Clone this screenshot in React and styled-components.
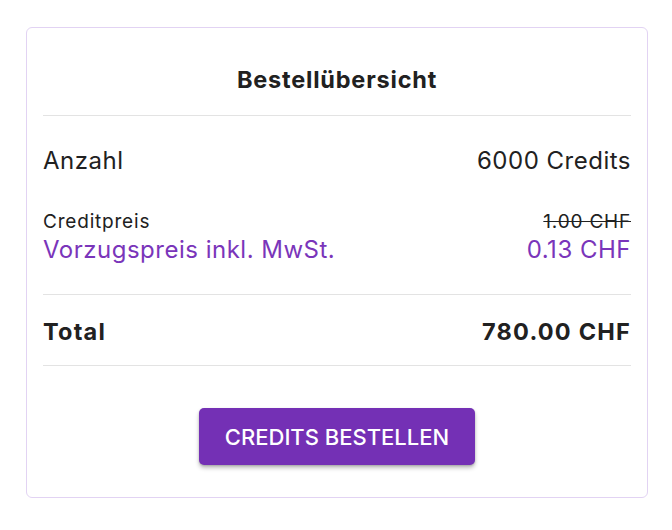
import React from 'react'
import styled, { createGlobalStyle } from 'styled-components'

const GlobalStyle = createGlobalStyle`
  body {
    margin: 0;
    background: #ffffff;
    font-family: Inter, Roboto, "Liberation Sans", sans-serif;
    color: #212121;
  }
`

const Page = styled.div`
  padding: 27px 24px 0 26px;
`

const Card = styled.section`
  width: 622px;
  height: 471px;
  box-sizing: border-box;
  border: 1px solid #e2d3f3;
  border-radius: 6px;
  padding: 0 16px;
  display: flex;
  flex-direction: column;
`

const Title = styled.h2`
  margin: 0;
  padding: 36px 0 19px;
  font-size: 23.5px;
  line-height: 32px;
  font-weight: 700;
  letter-spacing: 0.8px;
  text-align: center;
`

const Divider = styled.hr`
  margin: 0;
  border: none;
  border-top: 1px solid #e3e3e3;
`

const Section = styled.div`
  display: flex;
  flex-direction: column;
  padding: ${p => p.$pad || '0'};
`

const Row = styled.div`
  display: flex;
  justify-content: space-between;
  align-items: center;
  font-size: ${p => p.$size || 24}px;
  line-height: ${p => p.$line || 28}px;
  font-weight: ${p => (p.$bold ? 700 : 400)};
  letter-spacing: ${p => p.$track || 0.5}px;
  color: ${p => (p.$accent ? '#7a35ba' : '#212121')};
  margin-top: ${p => p.$top || 0}px;
`

const Old = styled.span`
  text-decoration: line-through;
`

const Actions = styled.div`
  display: flex;
  justify-content: center;
  padding-top: 42px;
`

const Button = styled.button`
  width: 276px;
  height: 57px;
  border: none;
  border-radius: 5px;
  background: #7430b5;
  color: #ffffff;
  font-family: Inter, Roboto, "Liberation Sans", sans-serif;
  font-size: 22px;
  font-weight: 500;
  text-transform: uppercase;
  box-shadow: 0 3px 4px rgba(0, 0, 0, 0.25), 0 1px 2px rgba(0, 0, 0, 0.15);
  cursor: pointer;
`

export default function App() {
  return (
    <>
      <GlobalStyle />
      <Page>
        <Card>
          <Title>Bestellübersicht</Title>
          <Divider />
          <Section $pad="31px 0 30px">
            <Row>
              <span>Anzahl</span>
              <span>6000 Credits</span>
            </Row>
            <Row $size={19} $line={24} $track={0.8} $top={35}>
              <span>Creditpreis</span>
              <Old>1.00 CHF</Old>
            </Row>
            <Row $accent $top={2}>
              <span>Vorzugspreis inkl. MwSt.</span>
              <span>0.13 CHF</span>
            </Row>
          </Section>
          <Divider />
          <Section $pad="23px 0 19px">
            <Row $bold $size={23.5} $track={1.2}>
              <span>Total</span>
              <span>780.00 CHF</span>
            </Row>
          </Section>
          <Divider />
          <Actions>
            <Button>Credits bestellen</Button>
          </Actions>
        </Card>
      </Page>
    </>
  )
}
